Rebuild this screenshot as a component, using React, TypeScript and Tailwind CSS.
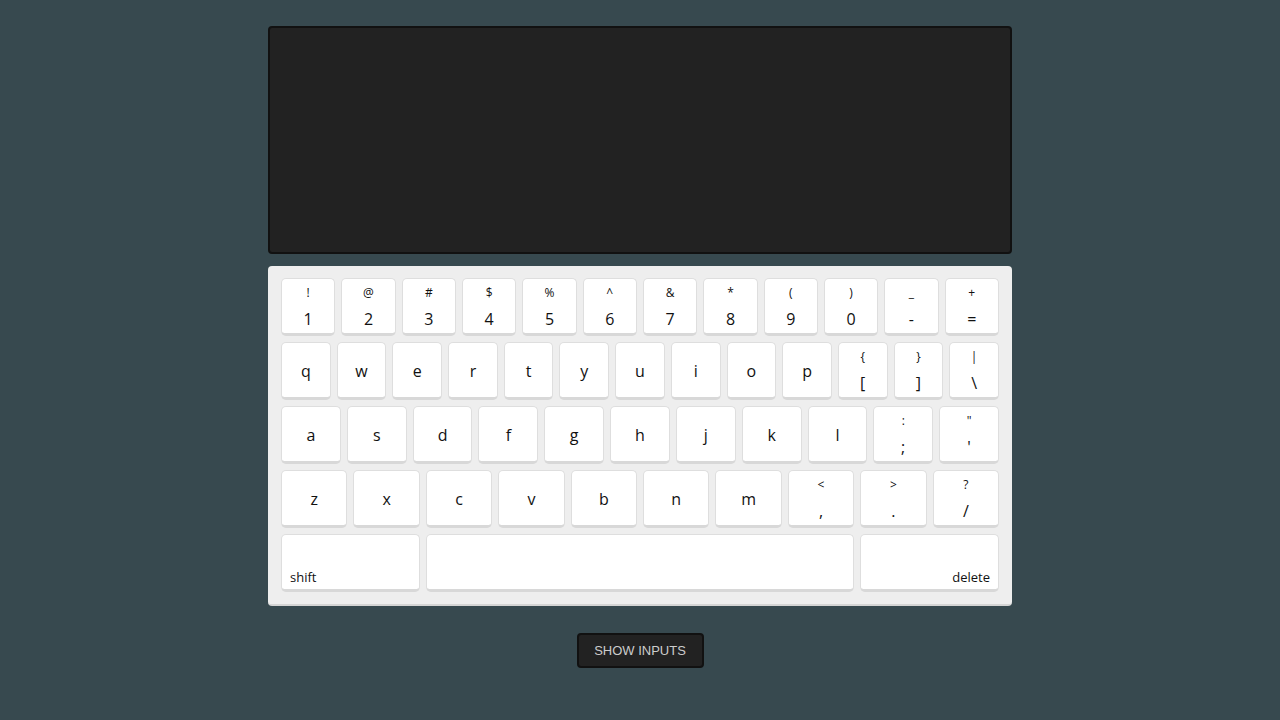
import React from "react";

const font = { fontFamily: '"Open Sans", "Noto Sans", sans-serif' };

type K = { main: string; top?: string };

const row1: K[] = [
  { top: "!", main: "1" }, { top: "@", main: "2" }, { top: "#", main: "3" }, { top: "$", main: "4" },
  { top: "%", main: "5" }, { top: "^", main: "6" }, { top: "&", main: "7" }, { top: "*", main: "8" },
  { top: "(", main: "9" }, { top: ")", main: "0" }, { top: "_", main: "-" }, { top: "+", main: "=" },
];
const row2: K[] = [
  ..."qwertyuiop".split("").map((c) => ({ main: c })),
  { top: "{", main: "[" }, { top: "}", main: "]" }, { top: "|", main: "\\" },
];
const row3: K[] = [
  ..."asdfghjkl".split("").map((c) => ({ main: c })),
  { top: ":", main: ";" }, { top: '"', main: "'" },
];
const row4: K[] = [
  ..."zxcvbnm".split("").map((c) => ({ main: c })),
  { top: "<", main: "," }, { top: ">", main: "." }, { top: "?", main: "/" },
];

const keyBase =
  "h-[58px] bg-white rounded-[5px] border border-[#dedede] border-b-[3px] border-b-[#d8d8d8] text-[#111]";

function Key({ k }: { k: K }) {
  return (
    <div className={`flex-1 flex flex-col items-center ${keyBase}`}>
      {k.top ? (
        <>
          <span className="text-[12px] leading-none mt-[8px] h-[12px]">{k.top}</span>
          <span className="text-[16px] leading-none mt-[12px]">{k.main}</span>
        </>
      ) : (
        <span className="text-[16px] leading-none mt-[20px]">{k.main}</span>
      )}
    </div>
  );
}

function Row({ keys }: { keys: K[] }) {
  return (
    <div className="flex gap-[6px]">
      {keys.map((k, i) => (
        <Key key={i} k={k} />
      ))}
    </div>
  );
}

export default function App() {
  return (
    <div className="w-[1280px] h-[720px] bg-[#37494f] flex flex-col items-center" style={font}>
      <div className="mt-[26px] w-[744px] h-[228px] bg-[#222222] border-2 border-[#111111] rounded-[4px]" />
      <div className="mt-[12px] w-[744px] bg-[#eeeeee] rounded-[4px] border-b-2 border-b-[#d5d5d5] pt-[12px] px-[13px] pb-[12px] flex flex-col gap-[6px]">
        <Row keys={row1} />
        <Row keys={row2} />
        <Row keys={row3} />
        <Row keys={row4} />
        <div className="flex gap-[6px]">
          <div className={`w-[139px] flex items-end pl-[8px] pb-[2px] text-[13px] ${keyBase}`}>shift</div>
          <div className={`flex-1 ${keyBase}`} />
          <div className={`w-[139px] flex items-end justify-end pr-[8px] pb-[2px] text-[13px] ${keyBase}`}>
            delete
          </div>
        </div>
      </div>
      <button
        className="mt-[27px] w-[127px] h-[35px] bg-[#222222] border-2 border-[#111111] rounded-[4px] text-[#cccccc] text-[13px] flex items-center justify-center"
        style={{ fontFamily: '"Liberation Sans", Arial, sans-serif' }}
      >
        SHOW INPUTS
      </button>
    </div>
  );
}
